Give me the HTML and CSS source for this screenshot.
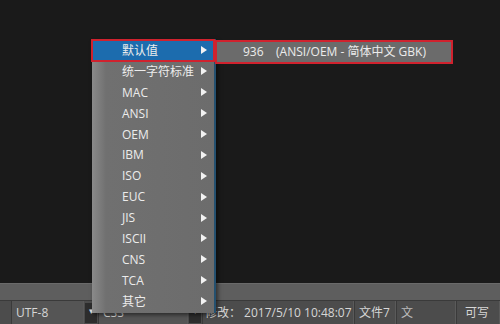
FILE: index.html
```html
<!DOCTYPE html>
<html lang="zh-CN">

<head>
    <meta charset="UTF-8">
    <title>编码菜单</title>
    <link rel="stylesheet" href="styles.css">
</head>

<body>
    <div class="editor"></div>
    <div class="band"></div>
    <div class="status">
        <div class="seg seg-enc">UTF-8</div>
        <div class="drop">&#9662;</div>
        <div class="seg seg-lang">CSS</div>
        <div class="drop">&#9662;</div>
        <div class="seg seg-time">修改： 2017/5/10 10:48:07</div>
        <div class="seg seg-file">文件7</div>
        <div class="seg seg-blur">文</div>
        <div class="seg seg-rw">可写</div>
    </div>

    <!-- encoding menu -->
    <div class="menu">
        <div class="item active"><span>默认值</span><i class="arrow"></i></div>
        <div class="item"><span>统一字符标准</span><i class="arrow"></i></div>
        <div class="item"><span>MAC</span><i class="arrow"></i></div>
        <div class="item"><span>ANSI</span><i class="arrow"></i></div>
        <div class="item"><span>OEM</span><i class="arrow"></i></div>
        <div class="item"><span>IBM</span><i class="arrow"></i></div>
        <div class="item"><span>ISO</span><i class="arrow"></i></div>
        <div class="item"><span>EUC</span><i class="arrow"></i></div>
        <div class="item"><span>JIS</span><i class="arrow"></i></div>
        <div class="item"><span>ISCII</span><i class="arrow"></i></div>
        <div class="item"><span>CNS</span><i class="arrow"></i></div>
        <div class="item"><span>TCA</span><i class="arrow"></i></div>
        <div class="item"><span>其它</span><i class="arrow"></i></div>
    </div>
    <div class="submenu">936&nbsp;&nbsp;&nbsp;&nbsp;(ANSI/OEM - 简体中文 GBK)</div>
</body>

</html>
```

FILE: styles.css
```css
body {
    margin: 0;
    width: 500px;
    height: 324px;
    overflow: hidden;
    background: #1b1b1b;
    font-family: "Open Sans", "Noto Sans CJK SC", sans-serif;
    font-size: 12px;
    color: #e2e2e2;
    position: relative;
}

.editor {
    height: 283px;
    background: #1a1a1a;
}

.band {
    height: 16px;
    background: #5e5e5e;
    border-top: 1px solid #6a6a6a;
}

.status {
    display: flex;
    height: 24px;
    background: #4c4c4c;
    border-top: 1px solid #3a3a3a;
    line-height: 23px;
}

.seg {
    padding: 0 4px;
    border-left: 1px solid #3a3a3a;
    border-right: 1px solid #5a5a5a;
    white-space: nowrap;
    color: #d6d6d6;
    overflow: hidden;
}

.seg-enc {
    margin-left: 11px;
    width: 63px;
    background: #555;
}

.drop {
    width: 12px;
    margin: 2px 1px 0;
    height: 20px;
    line-height: 16px;
    text-align: center;
    font-size: 9px;
    background: #2d2d2d;
    color: #ddd;
}

.seg-lang {
    width: 80px;
    background: #555;
}

.seg-time {
    width: 144px;
    padding-left: 2px;
}

.seg-file {
    width: 32px;
}

.seg-blur {
    width: 50px;
    color: #bbb;
}

.seg-rw {
    flex: 1;
    padding-left: 8px;
}

.menu {
    position: absolute;
    left: 92px;
    top: 39px;
    width: 122px;
    padding-top: 1px;
    height: 273px;
    background: linear-gradient(to right, #8a8a8a 0, #707070 14px, #6c6c6c 100%);
    border-right: 2px solid #24506f;
    box-shadow: 2px 2px 4px rgba(0, 0, 0, 0.5);
}

.item {
    display: flex;
    align-items: center;
    justify-content: space-between;
    height: 20.9px;
    padding: 0 7px 0 30px;
    color: #ececec;
}

.item.active {
    background: #1c6cae;
    outline: 2px solid #d0222e;
    outline-offset: -1px;
}

.arrow {
    width: 0;
    height: 0;
    border-top: 4px solid transparent;
    border-bottom: 4px solid transparent;
    border-left: 6px solid #f2f2f2;
}

.submenu {
    position: absolute;
    left: 215px;
    top: 40px;
    width: 208px;
    height: 20px;
    line-height: 20px;
    padding-left: 26px;
    background: #6b6b6b;
    border: 2px solid #d0222e;
    color: #ececec;
    white-space: nowrap;
}
```
